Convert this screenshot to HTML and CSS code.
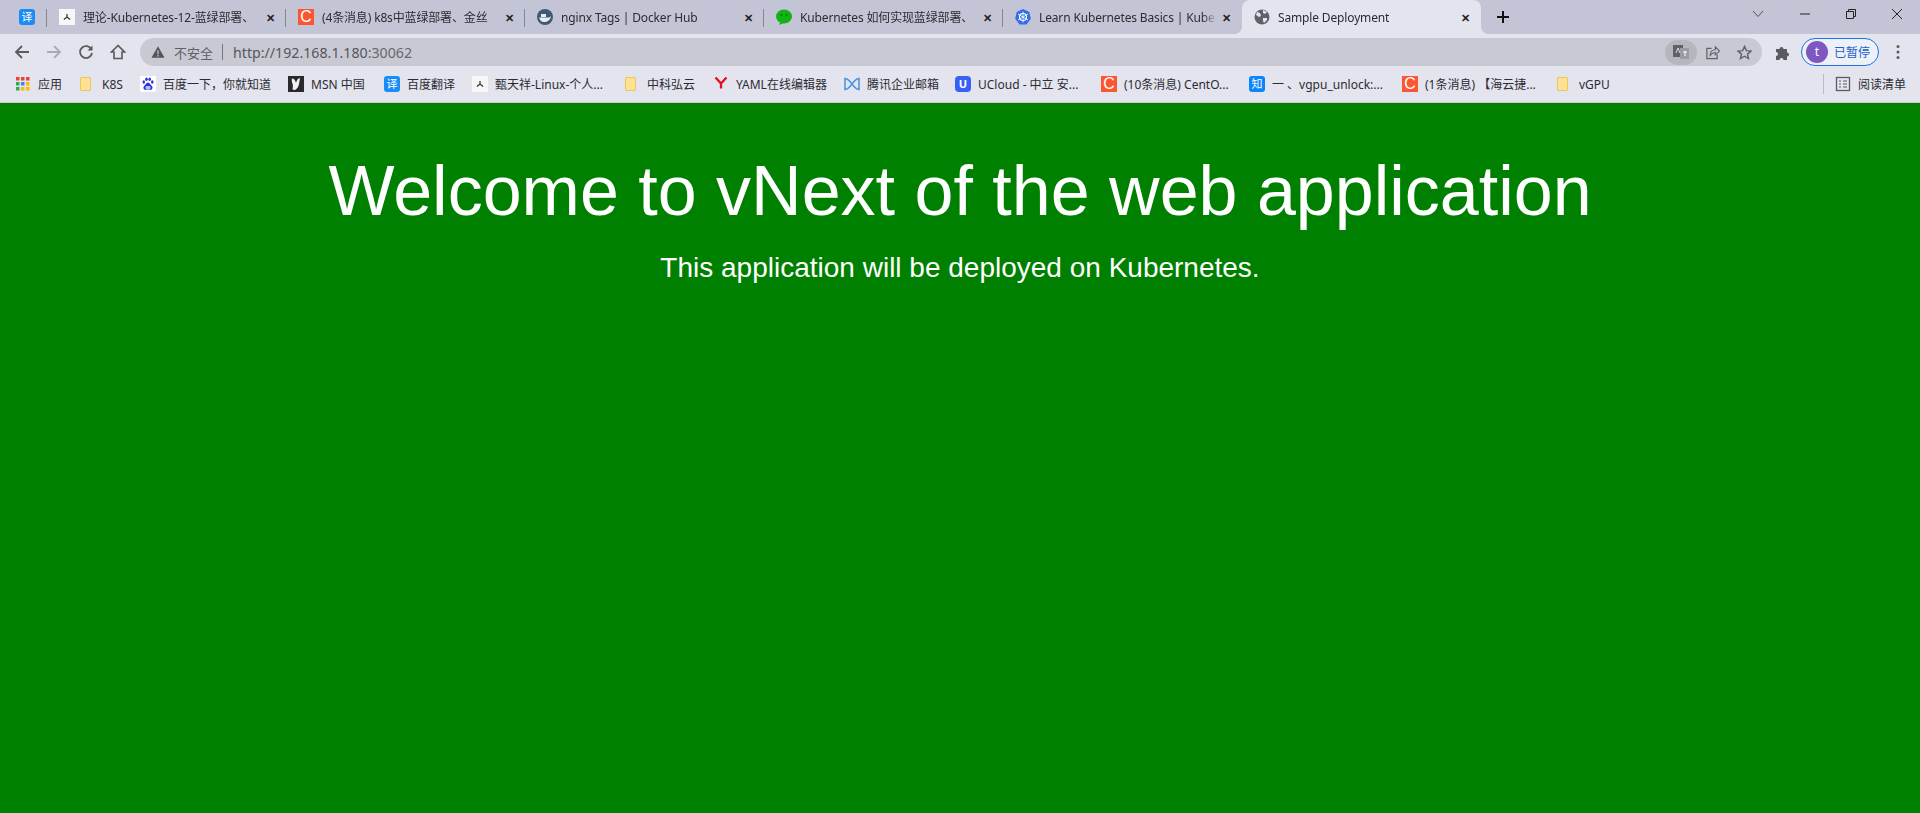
FILE: index.html
```html
<!DOCTYPE html>
<html lang="zh-CN">
  <head>
    <meta charset="UTF-8" />
    <meta name="viewport" content="width=device-width, initial-scale=1.0" />
    <title>Sample Deployment</title>
    <link rel="stylesheet" href="styles.css">
  </head>
  <body>
    <div class="tabstrip">
      <div class="tab-pinned">
        <span class="fav fav-blue">译</span>
      </div>
      <div class="tab">
        <span class="fav fav-white"><svg viewBox="0 0 16 16" width="10" height="10"><path d="M8 3v5M3 12l5-4 5 4" stroke="#333" stroke-width="2" fill="none"/></svg></span>
        <span class="tab-title">理论-Kubernetes-12-蓝绿部署、</span>
        <span class="tab-close">✕</span>
      </div>
      <div class="tab">
        <span class="fav fav-red">C</span>
        <span class="tab-title">(4条消息) k8s中蓝绿部署、金丝</span>
        <span class="tab-close">✕</span>
      </div>
      <div class="tab">
        <svg class="fav" viewBox="0 0 16 16"><circle cx="8" cy="8" r="8" fill="#3d5a73"/><path d="M2 8.500h9.500c1 0 2-.7 2.500-1.500-.5 4-3.500 6-7 6-3 0-4-2-5-4.500z" fill="#e8edf2"/><rect x="4" y="5" width="5" height="3" fill="#e8edf2"/></svg>
        <span class="tab-title">nginx Tags | Docker Hub</span>
        <span class="tab-close">✕</span>
      </div>
      <div class="tab">
        <svg class="fav" viewBox="0 0 16 16"><ellipse cx="8" cy="7.500" rx="8" ry="7" fill="#12b312"/><path d="M4 13l-.5 3 4-2z" fill="#12b312"/><circle cx="5.500" cy="6" r="1" fill="#0a6b0a"/><circle cx="10.500" cy="6" r="1" fill="#0a6b0a"/></svg>
        <span class="tab-title">Kubernetes 如何实现蓝绿部署、</span>
        <span class="tab-close">✕</span>
      </div>
      <div class="tab">
        <svg class="fav" viewBox="0 0 16 16"><path d="M8 0l6.300 3 1.500 6.800L11.500 15.500h-7L.2 9.800 1.700 3z" fill="#326de6"/><circle cx="8" cy="8" r="3.500" fill="none" stroke="#fff" stroke-width="1.200"/><path d="M8 2.500v11M3 5l10 6M13 5L3 11" stroke="#fff" stroke-width=".8"/></svg>
        <span class="tab-title">Learn Kubernetes Basics | Kube</span>
        <span class="tab-close">✕</span>
      </div>
      <div class="tab tab-active">
        <svg class="fav" viewBox="0 0 16 16"><circle cx="8" cy="8" r="7.500" fill="#5f6368"/><path d="M3 3l3 1 1 3-2 1-3-2zM9 9h4v2l-3 3-1-2zM9 1l4 2-2 2-2-1z" fill="#e3e4ee"/></svg>
        <span class="tab-title">Sample Deployment</span>
        <span class="tab-close">✕</span>
      </div>
      <svg class="newtab" viewBox="0 0 12 12"><path d="M6 0v12M0 6h12" stroke="#111" stroke-width="2"/></svg>
      <div class="window-btns">
        <svg width="12" height="8" viewBox="0 0 12 8"><path d="M1 1l5 5.500L11 1" stroke="#555" fill="none"/></svg>
        <svg width="10" height="2" viewBox="0 0 10 2"><path d="M0 1h10" stroke="#222"/></svg>
        <svg width="10" height="10" viewBox="0 0 10 10"><path d="M.5 2.500h7v7h-7zM2.500 2.500v-2h7v7h-2" stroke="#222" fill="none"/></svg>
        <svg width="10" height="10" viewBox="0 0 10 10"><path d="M0 0l10 10M10 0L0 10" stroke="#222"/></svg>
      </div>
    </div>

    <div class="toolbar">
      <svg class="tool" viewBox="0 0 16 16"><path d="M15 8H2M8 2L2 8l6 6" stroke="#5a5b61" stroke-width="1.800" fill="none"/></svg>
      <svg class="tool" viewBox="0 0 16 16"><path d="M1 8h13M8 2l6 6-6 6" stroke="#a9aab2" stroke-width="1.800" fill="none"/></svg>
      <svg class="tool" viewBox="0 0 16 16"><path d="M13.500 5.500A6 6 0 1 0 14 9" stroke="#5a5b61" stroke-width="1.800" fill="none"/><path d="M14.500 1.500v5h-5z" fill="#5a5b61"/></svg>
      <svg class="tool" viewBox="0 0 16 16"><path d="M8 1.500L1.500 8H4v6.500h8V8h2.500z" stroke="#5a5b61" stroke-width="1.600" fill="none"/></svg>
      <div class="omnibox">
        <svg class="warn" viewBox="0 0 16 16"><path d="M8 1.500L15.500 14.500H.5z" fill="#55565c"/><path d="M8 6v4.500M8 11.500V13" stroke="#c9cad3" stroke-width="1.400"/></svg>
        <span class="insecure">不安全</span>
        <span class="url-sep"></span>
        <span class="url"><span class="url-host">http://192.168.1.180</span>:30062</span>
        <span class="omni-translate">
          <svg width="16" height="16" viewBox="0 0 16 16"><rect y="1" width="10" height="12" fill="#5f6368"/><rect x="7" y="4" width="9" height="11" fill="#9a9ba3"/><path d="M3 9l2-5 2 5" stroke="#ddd" fill="none"/><path d="M10 8h4M12 7v5" stroke="#fff"/></svg>
        </span>
        <svg class="omni-icon" viewBox="0 0 16 16"><path d="M7 3.500H2v11h11V10" stroke="#5f6368" stroke-width="1.300" fill="none"/><path d="M5.500 11c0-4 2.500-6 5.500-6V2l4.500 4.500L11 10.500V8c-2.500 0-4 1-5.500 3z" stroke="#5f6368" stroke-width="1.200" fill="none"/></svg>
        <svg class="omni-icon omni-star" viewBox="0 0 16 16"><path d="M8 1.500l2 4.500 4.900.5-3.700 3.200 1.100 4.800L8 12l-4.300 2.500 1.100-4.800L1.100 6.500 6 6z" stroke="#5f6368" stroke-width="1.500" fill="none"/></svg>
      </div>
      <svg class="puzzle" viewBox="0 0 16 16"><path d="M1 5h3.500a2 2 0 1 1 4 0H12v3.500a2 2 0 1 1 0 4V16H8.500a2 2 0 1 0-4 0H1v-4a2 2 0 1 0 0-4z" fill="#5a5b61"/></svg>
      <div class="profile">
        <span class="avatar">t</span>
        <span>已暂停</span>
      </div>
      <svg class="kebab" viewBox="0 0 4 16"><circle cx="2" cy="2.500" r="1.500" fill="#5a5b61"/><circle cx="2" cy="8" r="1.500" fill="#5a5b61"/><circle cx="2" cy="13.500" r="1.500" fill="#5a5b61"/></svg>
    </div>

    <div class="bookmarks">
      <a class="bm bm-apps"><svg class="bm-icon" viewBox="0 0 16 16"><rect x="1" y="1" width="3.500" height="3.500" fill="#ea4335"/><rect x="6" y="1" width="3.500" height="3.500" fill="#ea4335"/><rect x="11" y="1" width="3.500" height="3.500" fill="#ea4335"/><rect x="1" y="6" width="3.500" height="3.500" fill="#34a853"/><rect x="6" y="6" width="3.500" height="3.500" fill="#4285f4"/><rect x="11" y="6" width="3.500" height="3.500" fill="#fbbc05"/><rect x="1" y="11" width="3.500" height="3.500" fill="#34a853"/><rect x="6" y="11" width="3.500" height="3.500" fill="#fbbc05"/><rect x="11" y="11" width="3.500" height="3.500" fill="#fbbc05"/></svg>应用</a>
      <a class="bm bm-k8s"><span class="folder"></span>K8S</a>
      <a class="bm bm-baidu"><svg class="bm-icon" viewBox="0 0 16 16"><rect width="16" height="16" rx="1" fill="#fff"/><ellipse cx="3.800" cy="6" rx="1.300" ry="1.800" fill="#2932e1"/><ellipse cx="6.500" cy="3.200" rx="1.300" ry="1.800" fill="#2932e1"/><ellipse cx="9.700" cy="3.200" rx="1.300" ry="1.800" fill="#2932e1"/><ellipse cx="12.300" cy="6" rx="1.300" ry="1.800" fill="#2932e1"/><path d="M8 6.500c-1.800 0-2.500 2.500-4 3.700-1.300 1.700 0 4 2 3.500 1.300-.3 2.700-.3 4 0 2 .5 3.300-1.800 2-3.500C10.500 9 9.800 6.500 8 6.500z" fill="#2932e1"/><rect x="5.500" y="10" width="5" height="3" rx="1" fill="#b9bcf5"/></svg>百度一下，你就知道</a>
      <a class="bm bm-msn"><svg class="bm-icon" viewBox="0 0 16 16"><rect width="16" height="16" fill="#2a2a2e"/><path d="M4 2.500c2 0 3.500 2 4 4.500.5-2 2-5 4-5l-1 6c-.5 3-2 5-4 6-1 .3-2 0-2.500-1 .5-2 .5-4 0-5.500C3.800 6 3.500 4 4 2.500z" fill="#f2f2f2"/></svg>MSN 中国</a>
      <a class="bm bm-fy"><span class="fav fav-blue">译</span>百度翻译</a>
      <a class="bm bm-zhen"><span class="fav fav-white"><svg viewBox="0 0 16 16" width="10" height="10"><path d="M8 3v5M3 12l5-4 5 4" stroke="#333" stroke-width="2" fill="none"/></svg></span>甄天祥-Linux-个人...</a>
      <a class="bm bm-zk"><span class="folder"></span>中科弘云</a>
      <a class="bm bm-yaml"><svg class="bm-icon" viewBox="0 0 16 16"><path d="M2.500 1.500L8 7.500v5M13.500 1.500L8 7.500" stroke="#e01020" stroke-width="2.300" fill="none"/></svg>YAML在线编辑器</a>
      <a class="bm bm-tx"><svg class="bm-icon" viewBox="0 0 16 16"><path d="M1 2.500c3 0 4 2 7 5.500 3 3.500 4 5.500 7 5.500V2.500C12 2.500 11 4.500 8 8 5 11.500 4 13.500 1 13.500z" stroke="#4a90e2" stroke-width="1.500" fill="none"/></svg>腾讯企业邮箱</a>
      <a class="bm bm-ucloud"><span class="fav fav-ucloud">U</span>UCloud - 中立 安...</a>
      <a class="bm bm-csdn"><span class="fav fav-red">C</span>(10条消息) CentO...</a>
      <a class="bm bm-zhihu"><span class="fav fav-zhihu">知</span>一 、vgpu_unlock:...</a>
      <a class="bm bm-csdn2"><span class="fav fav-red">C</span>(1条消息) 【海云捷...</a>
      <a class="bm bm-vgpu"><span class="folder"></span>vGPU</a>
      <span class="bm-sep"></span>
      <a class="bm bm-reader"><svg class="bm-icon" viewBox="0 0 16 16"><rect x="1.500" y="1.500" width="13" height="13" stroke="#5a5b61" stroke-width="1.300" fill="none"/><path d="M4 5h2M4 8h2M4 11h2M8 5h4M8 8h4M8 11h4" stroke="#5a5b61" stroke-width="1.200"/></svg>阅读清单</a>
    </div>

    <main class="page">
      <h1>Welcome to vNext of the web application</h1>
      <p>This application will be deployed on Kubernetes.</p>
    </main>
  </body>
</html>
```

FILE: styles.css
```css
* {
  box-sizing: border-box;
}
html,
body {
  height: 100%;
}
body {
  margin: 0;
  display: flex;
  flex-direction: column;
  overflow: hidden;
  font-family: "Noto Sans", "Noto Sans CJK SC", sans-serif;
  font-size: 12px;
  color: #2b2c33;
  background-color: #008000;
}

/* tab strip */
.tabstrip {
  display: flex;
  align-items: flex-end;
  height: 34px;
  padding-left: 8px;
  flex-shrink: 0;
  background-color: #c3c4d6;
}
.tab-pinned,
.tab {
  position: relative;
  display: flex;
  align-items: center;
  height: 34px;
}
.tab-pinned {
  width: 39px;
  padding-left: 11px;
}
.tab-pinned::after,
.tab::after {
  content: "";
  position: absolute;
  right: 0;
  top: 9px;
  width: 1px;
  height: 18px;
  background-color: #85868f;
}
.tab {
  gap: 8px;
  width: 239px;
  padding: 0 9px 0 12px;
}
.tab:nth-child(6)::after {
  display: none;
}
.tab-active {
  background-color: #e3e4ee;
  border-radius: 8px 8px 0 0;
}
/* the little concave corners either side of the active tab */
.tab-active::before,
.tab-active::after {
  content: "";
  display: block;
  position: absolute;
  top: auto;
  bottom: 0;
  width: 8px;
  height: 8px;
  background-color: transparent;
}
.tab-active::before {
  left: -8px;
  background-image: radial-gradient(circle at 0 0, transparent 8px, #e3e4ee 8px);
}
.tab-active::after {
  right: -8px;
  background-image: radial-gradient(circle at 100% 0, transparent 8px, #e3e4ee 8px);
}
.tab-title {
  flex: 1;
  overflow: hidden;
  white-space: nowrap;
  letter-spacing: -0.15px;
  -webkit-mask-image: linear-gradient(to right, #000 92%, transparent);
  mask-image: linear-gradient(to right, #000 92%, transparent);
}
.tab-close {
  width: 14px;
  margin-left: -6px;
  font-size: 11px;
  font-weight: 700;
  text-align: center;
  color: #222;
}
.newtab {
  align-self: center;
  width: 12px;
  height: 12px;
  margin-left: 16px;
}
.window-btns {
  display: flex;
  align-items: center;
  gap: 36px;
  height: 34px;
  margin-left: auto;
  padding: 0 18px 6px 0;
}

/* favicons */
.fav {
  display: flex;
  align-items: center;
  justify-content: center;
  width: 16px;
  height: 16px;
  flex-shrink: 0;
  font-size: 11px;
  line-height: 16px;
  color: #fff;
}
.fav-blue {
  background-color: #1a8cf5;
  border-radius: 3px;
}
.fav-white {
  background-color: #f7f7f7;
}
.fav-red {
  background-color: #fc5531;
  font-family: "Liberation Sans", sans-serif;
  font-size: 16px;
}
.fav-ucloud {
  background-color: #3860f4;
  border-radius: 4px;
  font-weight: 700;
}
.fav-zhihu {
  background-color: #0a84ff;
  border-radius: 3px;
}

/* toolbar */
.toolbar {
  display: flex;
  align-items: center;
  height: 36px;
  padding: 0 20px 0 14px;
  flex-shrink: 0;
  background-color: #e3e4ee;
}
.tool {
  width: 16px;
  height: 16px;
  margin-right: 16px;
}
.omnibox {
  display: flex;
  align-items: center;
  flex: 1;
  height: 28px;
  margin: 0 13px 0 -2px;
  padding-left: 11px;
  border-radius: 14px;
  background-color: #c8c9d3;
}
.warn {
  width: 14px;
  height: 14px;
}
.insecure {
  margin-left: 9px;
  font-size: 13px;
  color: #5f6068;
}
.url-sep {
  width: 1px;
  height: 16px;
  margin: 0 10px 0 9px;
  background-color: #75767e;
}
.url {
  font-size: 14.2px;
  color: #66676f;
}
.url-host {
  color: #55565e;
}
.omni-translate {
  display: flex;
  align-items: center;
  justify-content: center;
  width: 32px;
  height: 25px;
  margin-left: auto;
  border-radius: 13px;
  background-color: #b5b6c0;
}
.omni-icon {
  width: 15px;
  height: 15px;
  margin-left: 8px;
}
.omni-star {
  margin: 0 10px 0 17px;
}
.puzzle {
  width: 16px;
  height: 16px;
  margin-right: 10px;
}
.profile {
  display: flex;
  align-items: center;
  gap: 6px;
  width: 78px;
  height: 28px;
  padding-left: 4px;
  border: 1px solid #1a73e8;
  border-radius: 14px;
  background-color: #eef0f8;
  color: #1a62c8;
}
.avatar {
  width: 22px;
  height: 22px;
  border-radius: 50%;
  line-height: 21px;
  text-align: center;
  color: #fff;
  background-color: #7e57c2;
}
.kebab {
  width: 4px;
  height: 16px;
  margin-left: 17px;
}

/* bookmarks bar */
.bookmarks {
  display: flex;
  align-items: center;
  height: 33px;
  padding: 0 0 4px 15px;
  flex-shrink: 0;
  background-color: #e3e4ee;
  border-bottom: 1px solid #c9cad2;
}
.bm {
  display: flex;
  align-items: center;
  gap: 7px;
  white-space: nowrap;
  color: #2b2c33;
}
.bm-icon {
  width: 16px;
  height: 16px;
  flex-shrink: 0;
}
.folder {
  width: 11px;
  height: 14px;
  flex-shrink: 0;
  border: 1px solid #e8c95c;
  border-radius: 1px;
  background-color: #fde293;
}
.bm-apps { width: 65px; }
.bm-k8s { width: 60px; gap: 11px; }
.bm-baidu { width: 148px; }
.bm-msn { width: 96px; }
.bm-fy { width: 88px; }
.bm-zhen { width: 153px; }
.bm-zk { width: 88px; gap: 11px; }
.bm-yaml { width: 131px; }
.bm-tx { width: 111px; }
.bm-ucloud { width: 146px; }
.bm-csdn { width: 148px; }
.bm-zhihu { width: 153px; }
.bm-csdn2 { width: 155px; }
.bm-vgpu { gap: 11px; }
.bm-sep {
  width: 1px;
  height: 20px;
  margin-left: auto;
  background-color: #b9bac2;
}
.bm-reader {
  margin: 0 14px 0 11px;
}

/* the page itself */
.page {
  flex: 1;
  padding-top: 8px;
  text-align: center;
  font-family: "Liberation Sans", Arial, sans-serif;
  color: #fff;
  background-color: #008000;
}
.page h1 {
  margin: 40px 0 0;
  font-size: 70px;
  font-weight: 400;
  line-height: 81px;
}
.page p {
  margin: 20px 0 0;
  font-size: 28px;
  line-height: 32px;
}
```
